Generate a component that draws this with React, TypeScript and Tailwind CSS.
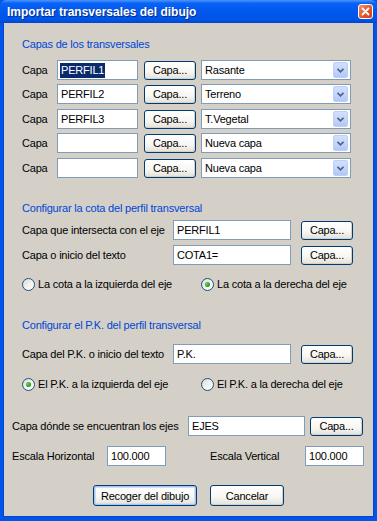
import React from "react";

const F = "font-['Liberation_Sans',Arial,sans-serif] text-[11px] leading-[14px] tracking-[-0.2px]";

function TextBox({ value = "", w, selected = false }: { value?: string; w: string; selected?: boolean }) {
  return (
    <div className={`${w} h-[20px] border border-[#7f9db9] bg-white flex items-center pl-[2px] text-black`}>
      {selected ? (
        <span className="bg-[#0b2a6c] text-white px-[1px] leading-[15px]">{value}</span>
      ) : (
        <span className="pl-[1px]">{value}</span>
      )}
    </div>
  );
}

function Btn({ label, w, h = "h-[19px]", def = false }: { label: string; w: string; h?: string; def?: boolean }) {
  return (
    <div
      className={`${w} ${h} rounded-[3px] border border-[#003c74] bg-[linear-gradient(180deg,#ffffff_0%,#f8f7f3_55%,#e3e1d8_100%)] flex items-center justify-center text-black ${
        def ? "shadow-[inset_0_0_0_1px_#a9c4ef,inset_0_0_0_2px_#cfdcf5]" : "shadow-[inset_-1px_-1px_0_#d6d0c5]"
      }`}
    >
      {label}
    </div>
  );
}

function Combo({ value }: { value: string }) {
  return (
    <div className="w-[150px] h-[20px] border border-[#7f9db9] bg-white flex items-center text-black">
      <span className="flex-1 pl-[3px]">{value}</span>
      <div className="w-[15px] h-[16px] mr-[2px] rounded-[2px] bg-[linear-gradient(180deg,#d2e0fd_0%,#c1d3fb_60%,#b2c7f6_100%)] border border-[#bcd0f7] flex items-center justify-center">
        <svg width="7" height="5" viewBox="0 0 7 5">
          <path d="M0.5 0.8 L3.5 3.8 L6.5 0.8" fill="none" stroke="#4d6185" strokeWidth="1.6" />
        </svg>
      </div>
    </div>
  );
}

function Radio({ checked, label, w }: { checked: boolean; label: string; w?: string }) {
  return (
    <div className={`${w ?? ""} flex items-center h-[14px]`}>
      <div className="w-[13px] h-[13px] rounded-full border border-[#1c5180] bg-[linear-gradient(135deg,#d9d8d1_0%,#f2f1ee_50%,#ffffff_100%)] flex items-center justify-center shrink-0">
        {checked && (
          <div className="w-[5px] h-[5px] rounded-full bg-[radial-gradient(circle_at_35%_35%,#63d55b_0%,#21a121_60%,#1a8a1a_100%)]" />
        )}
      </div>
      <span className="ml-[3px] text-black whitespace-nowrap">{label}</span>
    </div>
  );
}

function Header({ text }: { text: string }) {
  return <div className="h-[14px] pl-[18px] text-[#0046d5] whitespace-nowrap">{text}</div>;
}

export default function App() {
  const rows = [
    { v: "PERFIL1", sel: true, c: "Rasante", mt: "mt-[9px]" },
    { v: "PERFIL2", sel: false, c: "Terreno", mt: "mt-[4px]" },
    { v: "PERFIL3", sel: false, c: "T.Vegetal", mt: "mt-[5px]" },
    { v: "", sel: false, c: "Nueva capa", mt: "mt-[4px]" },
    { v: "", sel: false, c: "Nueva capa", mt: "mt-[5px]" },
  ];
  return (
    <div className={`${F} w-[377px] h-[521px] flex flex-col bg-[#0055ea] select-none`}>
      {/* Title bar */}
      <div className="h-[23px] shrink-0 flex items-center rounded-t-[6px] bg-[linear-gradient(180deg,#4a95ff_0%,#0a62f5_14%,#0058ee_45%,#0055e5_85%,#0046cf_100%)]">
        <span className="ml-[7px] text-white font-bold text-[12px] leading-[14px] tracking-normal [text-shadow:1px_1px_0_#0a2a8a] whitespace-nowrap">
          Importar transversales del dibujo
        </span>
        <div className="ml-auto mr-[4px] w-[15px] h-[15px] rounded-[3px] border border-white bg-[linear-gradient(135deg,#f0916d_0%,#e3562a_55%,#c8401c_100%)] flex items-center justify-center">
          <svg width="9" height="9" viewBox="0 0 9 9">
            <path d="M1.5 1.5 L7.5 7.5 M7.5 1.5 L1.5 7.5" stroke="#ffffff" strokeWidth="1.8" strokeLinecap="round" />
          </svg>
        </div>
      </div>
      {/* Body */}
      <div className="flex-1 flex mx-[3px] mb-[4px] border-l border-r border-b border-[#0843c9]">
        <div className="flex-1 bg-[#d4d0c8] flex flex-col">
          {/* Section 1 */}
          <div className="mt-[14px]">
            <Header text="Capas de los transversales" />
          </div>
          {rows.map((r, i) => (
            <div key={i} className={`${r.mt} flex items-center pl-[18px] h-[20px]`}>
              <span className="w-[35px] text-black">Capa</span>
              <TextBox value={r.v} w="w-[81px]" selected={r.sel} />
              <div className="ml-[6px]">
                <Btn label="Capa..." w="w-[52px]" />
              </div>
              <div className="ml-[5px]">
                <Combo value={r.c} />
              </div>
            </div>
          ))}

          {/* Section 2 */}
          <div className="mt-[23px]">
            <Header text="Configurar la cota del perfil transversal" />
          </div>
          <div className="mt-[5px] flex items-center pl-[18px] h-[20px]">
            <span className="w-[151px] text-black whitespace-nowrap">Capa que intersecta con el eje</span>
            <TextBox value="PERFIL1" w="w-[118px]" />
            <div className="ml-[10px]">
              <Btn label="Capa..." w="w-[52px]" />
            </div>
          </div>
          <div className="mt-[5px] flex items-center pl-[18px] h-[20px]">
            <span className="w-[151px] text-black whitespace-nowrap">Capa o inicio del texto</span>
            <TextBox value="COTA1=" w="w-[118px]" />
            <div className="ml-[10px]">
              <Btn label="Capa..." w="w-[52px]" />
            </div>
          </div>
          <div className="mt-[12px] flex items-center pl-[18px]">
            <Radio checked={false} label="La cota a la izquierda del eje" w="w-[179px]" />
            <Radio checked={true} label="La cota a la derecha del eje" />
          </div>

          {/* Section 3 */}
          <div className="mt-[27px]">
            <Header text="Configurar el P.K. del perfil transversal" />
          </div>
          <div className="mt-[12px] flex items-center pl-[18px] h-[20px]">
            <span className="w-[151px] text-black whitespace-nowrap">Capa del P.K. o inicio del texto</span>
            <TextBox value="P.K." w="w-[118px]" />
            <div className="ml-[10px]">
              <Btn label="Capa..." w="w-[52px]" />
            </div>
          </div>
          <div className="mt-[13px] flex items-center pl-[18px]">
            <Radio checked={true} label="El P.K. a la izquierda del eje" w="w-[179px]" />
            <Radio checked={false} label="El P.K. a la derecha del eje" />
          </div>

          {/* Section 4 */}
          <div className="mt-[25px] flex items-center pl-[8px] h-[20px]">
            <span className="w-[176px] text-black whitespace-nowrap">Capa dónde se encuentran los ejes</span>
            <TextBox value="EJES" w="w-[117px]" />
            <div className="ml-[5px]">
              <Btn label="Capa..." w="w-[53px]" />
            </div>
          </div>
          <div className="mt-[10px] flex items-center pl-[8px] h-[20px]">
            <span className="w-[95px] text-black whitespace-nowrap">Escala Horizontal</span>
            <TextBox value="100.000" w="w-[59px]" />
            <span className="ml-[44px] w-[95px] text-black whitespace-nowrap">Escala Vertical</span>
            <TextBox value="100.000" w="w-[59px]" />
          </div>
          <div className="mt-[19px] flex items-center pl-[89px]">
            <Btn label="Recoger del dibujo" w="w-[104px]" h="h-[21px]" def />
            <div className="ml-[13px]">
              <Btn label="Cancelar" w="w-[74px]" h="h-[21px]" />
            </div>
          </div>
        </div>
      </div>
    </div>
  );
}
